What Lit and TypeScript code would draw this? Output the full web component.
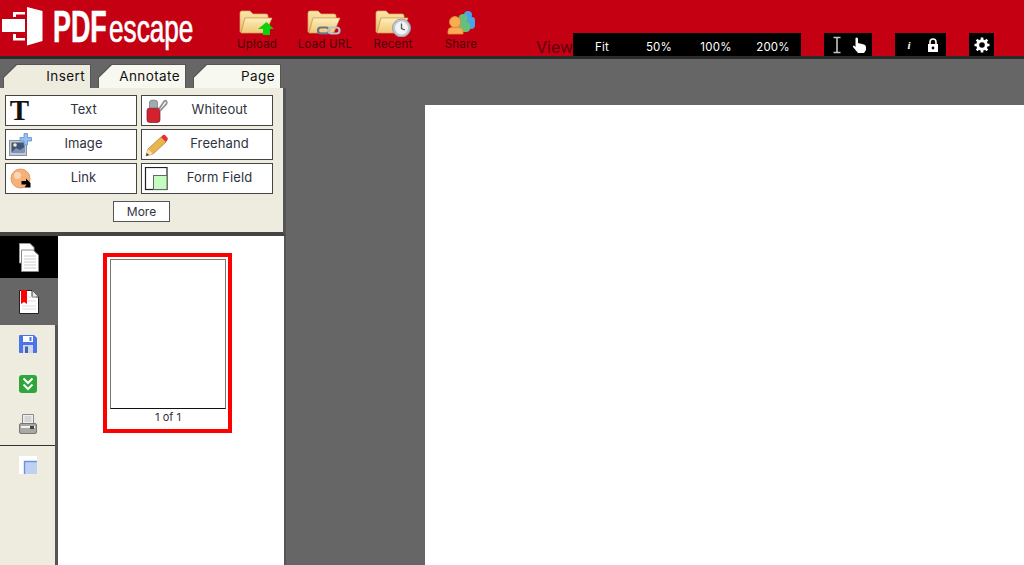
import { LitElement, html, svg, css } from "lit";
import { customElement } from "lit/decorators.js";

const folder = (extra: unknown) => html`<svg class="nav-icon" viewBox="0 0 36 27" width="36" height="27">
  <defs>
    <linearGradient id="fb" x1="0" y1="0" x2="0" y2="1"><stop offset="0" stop-color="#fbe6a9" /><stop offset="1" stop-color="#e9bd6b" /></linearGradient>
    <linearGradient id="ff" x1="0" y1="0" x2="0" y2="1"><stop offset="0" stop-color="#fdeeba" /><stop offset="1" stop-color="#f0c677" /></linearGradient>
  </defs>
  <path d="M1 3 Q1 1 3 1 H11 L14 4 H27 Q29 4 29 6 V8 H6 L2 22 H1 Z" fill="url(#fb)" stroke="#d8ae68" stroke-width=".7" />
  <path d="M6 8 H33 L27 22 Q26.500 23 25 23 H2 Z" fill="url(#ff)" stroke="#cfa35c" stroke-width=".7" />
  ${extra}
</svg>`;

const icons: Record<string, unknown> = {
  upload: folder(svg`<path d="M27.500 12 L35 19 H31 V25 H24 V19 H19 Z" fill="#0bd10b" />`),
  url: folder(svg`<g fill="none">
    <rect x="11" y="17.500" width="11" height="6" rx="3" stroke="#66748a" stroke-width="2.200" />
    <rect x="21.500" y="17.500" width="11" height="6" rx="3" stroke="#b9c1ce" stroke-width="2.200" />
  </g>`),
  recent: folder(svg`<circle cx="26.500" cy="18" r="9" fill="#c3c7d0" stroke="#9a9ea8" />
    <circle cx="26.500" cy="18" r="6.500" fill="#f3f4f6" />
    <path d="M26.500 13.500 V18.500 L30 20" fill="none" stroke="#555" stroke-width="1.300" />`),
  share: html`<svg class="nav-icon" viewBox="0 0 36 27" width="36" height="27">
    <circle cx="25" cy="5" r="4" fill="#4da3e8" />
    <circle cx="29" cy="10" r="3" fill="#4da3e8" />
    <rect x="21" y="8" width="11" height="11" rx="4" fill="#4da3e8" />
    <circle cx="20" cy="8.500" r="4.500" fill="#66c07a" />
    <rect x="14" y="12" width="13" height="10" rx="4" fill="#66c07a" />
    <circle cx="12" cy="12" r="5.500" fill="#f9ab55" stroke="#ee8a2a" stroke-width=".8" />
    <path d="M5 24 V21 Q5 17.500 9 17.500 H16 Q20 17.500 20 21 V24 Z" fill="#f9ab55" stroke="#ee8a2a" stroke-width=".8" />
  </svg>`,
  text: html`<span class="t-glyph">T</span>`,
  whiteout: html`<svg viewBox="0 0 24 24" width="24" height="24">
    <path d="M3 11.500 Q3 9 6 9 H14 Q16 9 16 11.500 V21 Q16 23.500 13 23.500 H6 Q3 23.500 3 21 Z" fill="#d3212e" stroke="#7a2025" stroke-width=".7" />
    <path d="M5.500 9 V3 Q5.500 1 9.500 1 Q13.500 1 13.500 3 V9 Z" fill="#a4a9ae" stroke="#666" stroke-width=".6" />
    <path d="M15 10 L20 2.500 Q21.500 0.800 22.500 2.500 Q23.300 4.500 21.500 6 L16 12" fill="none" stroke="#8d9297" stroke-width="1.800" />
  </svg>`,
  image: html`<svg viewBox="0 0 24 24" width="24" height="24">
    <rect x="1.500" y="7.500" width="17" height="15" fill="#c3c9d3" stroke="#8c93a0" />
    <rect x="3.500" y="9.500" width="13" height="10" fill="#3f5579" />
    <path d="M3.500 19.500 L8 15 L12 17 L16.500 14 V19.500 Z" fill="#7d94b8" />
    <circle cx="7" cy="12" r="1.800" fill="#f5efc0" />
    <path d="M16 0.500 H19.500 V4.500 H23.500 V8 H19.500 V12 H16 V8 H12 V4.500 H16 Z" fill="#9cc0ec" stroke="#5a90d4" stroke-width=".8" />
  </svg>`,
  pencil: html`<svg viewBox="0 0 24 24" width="24" height="24">
    <path d="M2 23 L4 16 L17 4 L22 9 L9 21 Z" fill="#eab54e" stroke="#a87a2a" stroke-width=".7" />
    <path d="M2 23 L4 16 L9 21 Z" fill="#f7dfb0" />
    <path d="M2 23 L2.800 20 L5 22 Z" fill="#333" />
    <path d="M17 4 L19 2 Q20 1.300 21 2 L23.500 4.700 Q24 6 23.500 7 L22 9 Z" fill="#e8303a" />
  </svg>`,
  link: html`<svg viewBox="0 0 24 24" width="24" height="24">
    <circle cx="12.500" cy="11.500" r="9.500" fill="#f4b27a" stroke="#e8975a" />
    <circle cx="9.500" cy="8.500" r="3.500" fill="#fad7b4" />
    <path d="M13.500 14 H18 V11.500 L22.500 16 V20.500 H16.500 L18.500 17.500 H13.500 Z" fill="#000" />
  </svg>`,
  field: html`<svg viewBox="0 0 24 24" width="24" height="24">
    <rect x="1.500" y="0.500" width="21.500" height="22" fill="#fff" stroke="#222" stroke-width="1.200" />
    <rect x="9.500" y="8.500" width="13.500" height="14" fill="#c3fbc0" stroke="#666" />
  </svg>`,
  pages: html`<svg viewBox="0 0 20 29" width="20" height="29">
    <path d="M0.500 0.500 H11 L15 4.500 V20 H0.500 Z" fill="#fff" stroke="#999" />
    <path d="M2.500 7 H14 L19.500 12 V28.500 H2.500 Z" fill="#fff" stroke="#888" />
    <path d="M5 13 H17 M5 16 H17 M5 19 H17 M5 22 H17 M5 25 H17" stroke="#ccc" />
  </svg>`,
  bookmark: html`<svg viewBox="0 0 20 24" width="20" height="24">
    <path d="M0.500 0.500 H13 L19.500 7 V23.500 H0.500 Z" fill="#fff" stroke="#222" />
    <path d="M13 0.500 V7 H19.500" fill="#e6e6e6" stroke="#333" />
    <path d="M3 16 H17 M3 19 H17 M9 7 H17 M9 11 H17" stroke="#ddd" />
    <path d="M2 0 H8 V14 L5 12 L2 14 Z" fill="#f00" />
  </svg>`,
  save: html`<svg viewBox="0 0 18 18" width="18" height="18">
    <path d="M1 0 H15 L18 3 V17 Q18 18 17 18 H1 Q0 18 0 17 V1 Q0 0 1 0 Z" fill="#4a74e8" />
    <rect x="4" y="1" width="10" height="6" fill="#fff" />
    <rect x="10.500" y="2" width="2" height="4" fill="#4a74e8" />
    <rect x="4" y="10" width="10" height="8" fill="#cdd6f0" />
    <rect x="6" y="11.500" width="3" height="6.500" fill="#4a63a8" />
  </svg>`,
  down: html`<svg viewBox="0 0 18 18" width="18" height="18">
    <rect width="18" height="18" rx="3" fill="#2fa53a" />
    <path d="M4.500 3.500 L9 8 L13.500 3.500 M4.500 9.500 L9 14 L13.500 9.500" fill="none" stroke="#fff" stroke-width="2" />
  </svg>`,
  print: html`<svg viewBox="0 0 18 20" width="18" height="20">
    <path d="M3.500 .5 H14.500 V10 H3.500 Z" fill="#eee" stroke="#8a8a8a" />
    <path d="M5.500 3 H12.500 M5.500 5 H12.500 M5.500 7 H12.500" stroke="#bbb" />
    <rect x="0.500" y="9.500" width="17" height="10" rx="1.500" fill="#a8a8a4" stroke="#777" />
    <rect x="2" y="12" width="14" height="2" fill="#f1f1ee" />
    <rect x="11" y="12" width="4" height="3" fill="#444" />
  </svg>`,
  blank: html`<svg viewBox="0 0 18 18" width="18" height="18">
    <rect width="18" height="18" fill="#fff" />
    <rect x="5.500" y="5.500" width="12.500" height="12.500" fill="#bfd0f2" />
    <path d="M5.500 18 V5.500 H18" fill="none" stroke="#6d8fe6" stroke-width="1.400" />
  </svg>`,
};

@customElement("app-root")
export class AppRoot extends LitElement {
  static styles = css`
    :host {
      display: block;
      height: 100vh;
      overflow: hidden;
      font-family: Inter, "Liberation Sans", sans-serif;
      background: #666;
    }
    .app {
      height: 100%;
      display: flex;
      flex-direction: column;
    }
    /* Header */
    .header {
      height: 56px;
      flex: none;
      background: #c40012;
      border-bottom: 3px solid #2a2a2a;
      display: flex;
    }
    .logo {
      width: 223px;
      flex: none;
      display: block;
    }
    .nav {
      width: 68px;
      flex: none;
      display: flex;
      flex-direction: column;
      align-items: center;
      padding-top: 10px;
      color: #4d0009;
      font-size: 11.5px;
      letter-spacing: 0.2px;
      line-height: 14px;
    }
    .nav-icon {
      display: block;
    }
    .view {
      margin-left: 41px;
      display: flex;
      align-items: flex-end;
      gap: 23px;
    }
    .view-label {
      width: 37px;
      margin-right: -23px;
      color: #5c000c;
      font-size: 16px;
      line-height: 18px;
    }
    .group {
      height: 23px;
      background: #000;
      color: #fff;
      display: flex;
      align-items: center;
      font-size: 11.5px;
    }
    .zoom {
      width: 57px;
      text-align: center;
      letter-spacing: 0.2px;
      padding: 4px 0 0 1px;
      box-sizing: border-box;
    }
    .group svg {
      display: block;
    }
    .tools {
      width: 48px;
      justify-content: space-around;
      padding: 0 2px;
      box-sizing: border-box;
    }
    .tools.info {
      width: 51px;
      padding: 0 7px 0 10px;
      justify-content: space-between;
    }
    .tools.gear {
      width: 25px;
      padding: 0;
      justify-content: center;
    }
    .info-mark {
      font-family: "Liberation Serif", serif;
      font-style: italic;
      font-size: 11px;
      font-weight: 700;
      width: 8px;
      text-align: center;
    }
    /* Body */
    .body {
      flex: 1;
      min-height: 0;
      display: flex;
    }
    .side {
      width: 286px;
      flex: none;
      display: flex;
      flex-direction: column;
    }
    .tabs {
      display: flex;
      gap: 7px;
      padding: 5px 0 0 3px;
      height: 24px;
    }
    .tab {
      width: 88px;
      height: 24px;
      box-sizing: border-box;
      padding: 1px 1px 0;
      background: #555;
      clip-path: polygon(0 100%, 0 55%, 13px 0, 100% 0, 100% 100%);
    }
    .tab span {
      display: block;
      height: 100%;
      background: #f7f8f0;
      clip-path: polygon(0 100%, 0 55%, 13px 0, 100% 0, 100% 100%);
      text-align: right;
      padding-right: 5px;
      box-sizing: border-box;
      font-size: 13.5px;
      letter-spacing: 0.4px;
      line-height: 23px;
      color: #111;
    }
    .tab.active span {
      background: #eeecdf;
    }
    .panel {
      height: 144px;
      flex: none;
      width: 283px;
      background: #eeecdf;
      border-right: 3px solid #555;
      border-bottom: 4px solid #444;
      display: flex;
      flex-direction: column;
      align-items: center;
    }
    .tool-grid {
      margin-top: 7px;
      display: grid;
      grid-template-columns: 132px 132px;
      grid-auto-rows: 31px;
      gap: 3px 4px;
      margin-right: 6px;
    }
    .tool {
      background: #fff;
      border: 1px solid #444;
      display: flex;
      align-items: center;
      color: #2f3340;
      font-size: 13px;
      letter-spacing: 0.1px;
      box-sizing: border-box;
    }
    .tool-icon {
      width: 24px;
      margin-left: 2px;
      flex: none;
      display: flex;
      justify-content: center;
    }
    .tool-icon svg {
      display: block;
    }
    .t-glyph {
      font-family: "Liberation Serif", serif;
      font-weight: 700;
      font-size: 29px;
      line-height: 24px;
      color: #111;
      margin-top: -1px;
    }
    .tool-label {
      flex: 1;
      text-align: center;
      padding-bottom: 3px;
    }
    .more {
      margin-top: 7px;
      width: 57px;
      height: 21px;
      box-sizing: border-box;
      background: #fff;
      border: 1px solid #555;
      text-align: center;
      font-size: 12px;
      line-height: 20px;
      color: #2f3340;
    }
    .lower {
      flex: 1;
      min-height: 0;
      display: flex;
      border-right: 2px solid #555;
    }
    .rail {
      width: 58px;
      flex: none;
      display: flex;
      flex-direction: column;
    }
    .rail-tab {
      display: flex;
      justify-content: center;
      align-items: center;
      flex: none;
    }
    .rail-tab svg,
    .rail-item svg {
      display: block;
    }
    .rail-tab.pages {
      height: 42px;
      background: #000;
    }
    .rail-tab.marks {
      height: 47px;
      background: #666;
    }
    .rail-tools {
      flex: 1;
      background: #eeecdf;
      border-right: 3px solid #555;
      display: flex;
      flex-direction: column;
      align-items: center;
    }
    .rail-group {
      align-self: stretch;
      display: flex;
      flex-direction: column;
      align-items: center;
      gap: 21.5px;
      padding: 10px 0 11px;
      border-bottom: 1px solid #333;
    }
    .rail-group.last {
      border-bottom: none;
    }
    .thumbs {
      flex: 1;
      background: #fff;
      padding: 17px 0 0 45px;
    }
    .thumb {
      width: 129px;
      height: 180px;
      box-sizing: border-box;
      border: 4px solid #f00;
      padding: 2px 2px 0 3px;
      display: flex;
      flex-direction: column;
    }
    .thumb-page {
      height: 150px;
      flex: none;
      box-sizing: border-box;
      border: 1px solid #777;
      border-bottom-color: #111;
    }
    .thumb-label {
      text-align: center;
      font-size: 11px;
      line-height: 15px;
      color: #333;
      padding-top: 1px;
    }
    .viewer {
      flex: 1;
      min-width: 0;
      padding: 46px 0 0 139px;
      display: flex;
    }
    .sheet {
      flex: 1;
      background: #fff;
    }
  `;

  navItems = [
    { label: "Upload", icon: "upload" },
    { label: "Load URL", icon: "url" },
    { label: "Recent", icon: "recent" },
    { label: "Share", icon: "share" },
  ];

  toolItems = [
    { label: "Text", icon: "text" },
    { label: "Whiteout", icon: "whiteout" },
    { label: "Image", icon: "image" },
    { label: "Freehand", icon: "pencil" },
    { label: "Link", icon: "link" },
    { label: "Form Field", icon: "field" },
  ];

  renderLogo() {
    return html`<svg class="logo" viewBox="0 0 223 56" width="223" height="56">
      <g fill="#fff">
        <path d="M27 7 L42.500 11 V41 L27 45.500 Z" />
        <rect x="2" y="19" width="23" height="13" />
        <path d="M13 12 H25 V14.500 H16 V17 H13 Z" />
        <path d="M13 34 H16 V38 H25 V40.500 H13 Z" />
        <text transform="translate(53 42) scale(.61 1)" font-family="Liberation Sans" font-weight="700" font-size="44" stroke="#fff" stroke-width=".6">PDF</text>
        <text transform="translate(109 42) scale(.68 1)" font-family="Liberation Sans" font-size="38.500" stroke="#fff" stroke-width=".7">escape</text>
      </g>
    </svg>`;
  }

  render() {
    return html`
      <div class="app">
        <div class="header">
          ${this.renderLogo()}
          ${this.navItems.map(
            (n) => html`<div class="nav">${icons[n.icon]}<span>${n.label}</span></div>`
          )}
          <div class="view">
            <div class="view-label">View</div>
            <div class="group">
              ${["Fit", "50%", "100%", "200%"].map((z) => html`<span class="zoom">${z}</span>`)}
            </div>
            <div class="group tools">
              <svg viewBox="0 0 12 18" width="12" height="18">
                <path d="M2.500 1.500 H9.500 M6 1.500 V16.500 M2.500 16.500 H9.500" fill="none" stroke="#c4c4c4" stroke-width="1.600" />
              </svg>
              <svg viewBox="0 0 14 16" width="14" height="16">
                <path d="M3.500 1 Q5 0 6 1.500 V6 L12 7.500 Q14 8 14 10 V13 L12 16 H6 L1 10 Q0.500 8.500 2 8.500 L3.500 10 Z" fill="#fff" />
              </svg>
            </div>
            <div class="group tools info">
              <span class="info-mark">i</span>
              <svg viewBox="0 0 12 14" width="12" height="14">
                <path d="M3 6 V4 Q3 1 6 1 Q9 1 9 4 V6" fill="none" stroke="#fff" stroke-width="1.600" />
                <rect x="1" y="6" width="10" height="8" fill="#fff" />
                <circle cx="6" cy="10" r="1.400" fill="#000" />
              </svg>
            </div>
            <div class="group tools gear">
              <svg viewBox="0 0 16 16" width="16" height="16">
                <circle cx="8" cy="8" r="4.300" fill="none" stroke="#fff" stroke-width="3" />
                <path d="M8 0.500 V15.500 M0.500 8 H15.500 M2.700 2.700 L13.300 13.300 M13.300 2.700 L2.700 13.300" stroke="#fff" stroke-width="2.600" stroke-dasharray="3 9 3 9" />
              </svg>
            </div>
          </div>
        </div>
        <div class="body">
          <div class="side">
            <div class="tabs">
              <div class="tab active"><span>Insert</span></div>
              <div class="tab"><span>Annotate</span></div>
              <div class="tab"><span>Page</span></div>
            </div>
            <div class="panel">
              <div class="tool-grid">
                ${this.toolItems.map(
                  (t) => html`<div class="tool">
                    <span class="tool-icon">${icons[t.icon]}</span>
                    <span class="tool-label">${t.label}</span>
                  </div>`
                )}
              </div>
              <div class="more">More</div>
            </div>
            <div class="lower">
              <div class="rail">
                <div class="rail-tab pages">${icons.pages}</div>
                <div class="rail-tab marks">${icons.bookmark}</div>
                <div class="rail-tools">
                  <div class="rail-group">
                    <div class="rail-item">${icons.save}</div>
                    <div class="rail-item">${icons.down}</div>
                    <div class="rail-item">${icons.print}</div>
                  </div>
                  <div class="rail-group last">
                    <div class="rail-item">${icons.blank}</div>
                  </div>
                </div>
              </div>
              <div class="thumbs">
                <div class="thumb">
                  <div class="thumb-page"></div>
                  <div class="thumb-label">1 of 1</div>
                </div>
              </div>
            </div>
          </div>
          <div class="viewer"><div class="sheet"></div></div>
        </div>
      </div>
    `;
  }
}
